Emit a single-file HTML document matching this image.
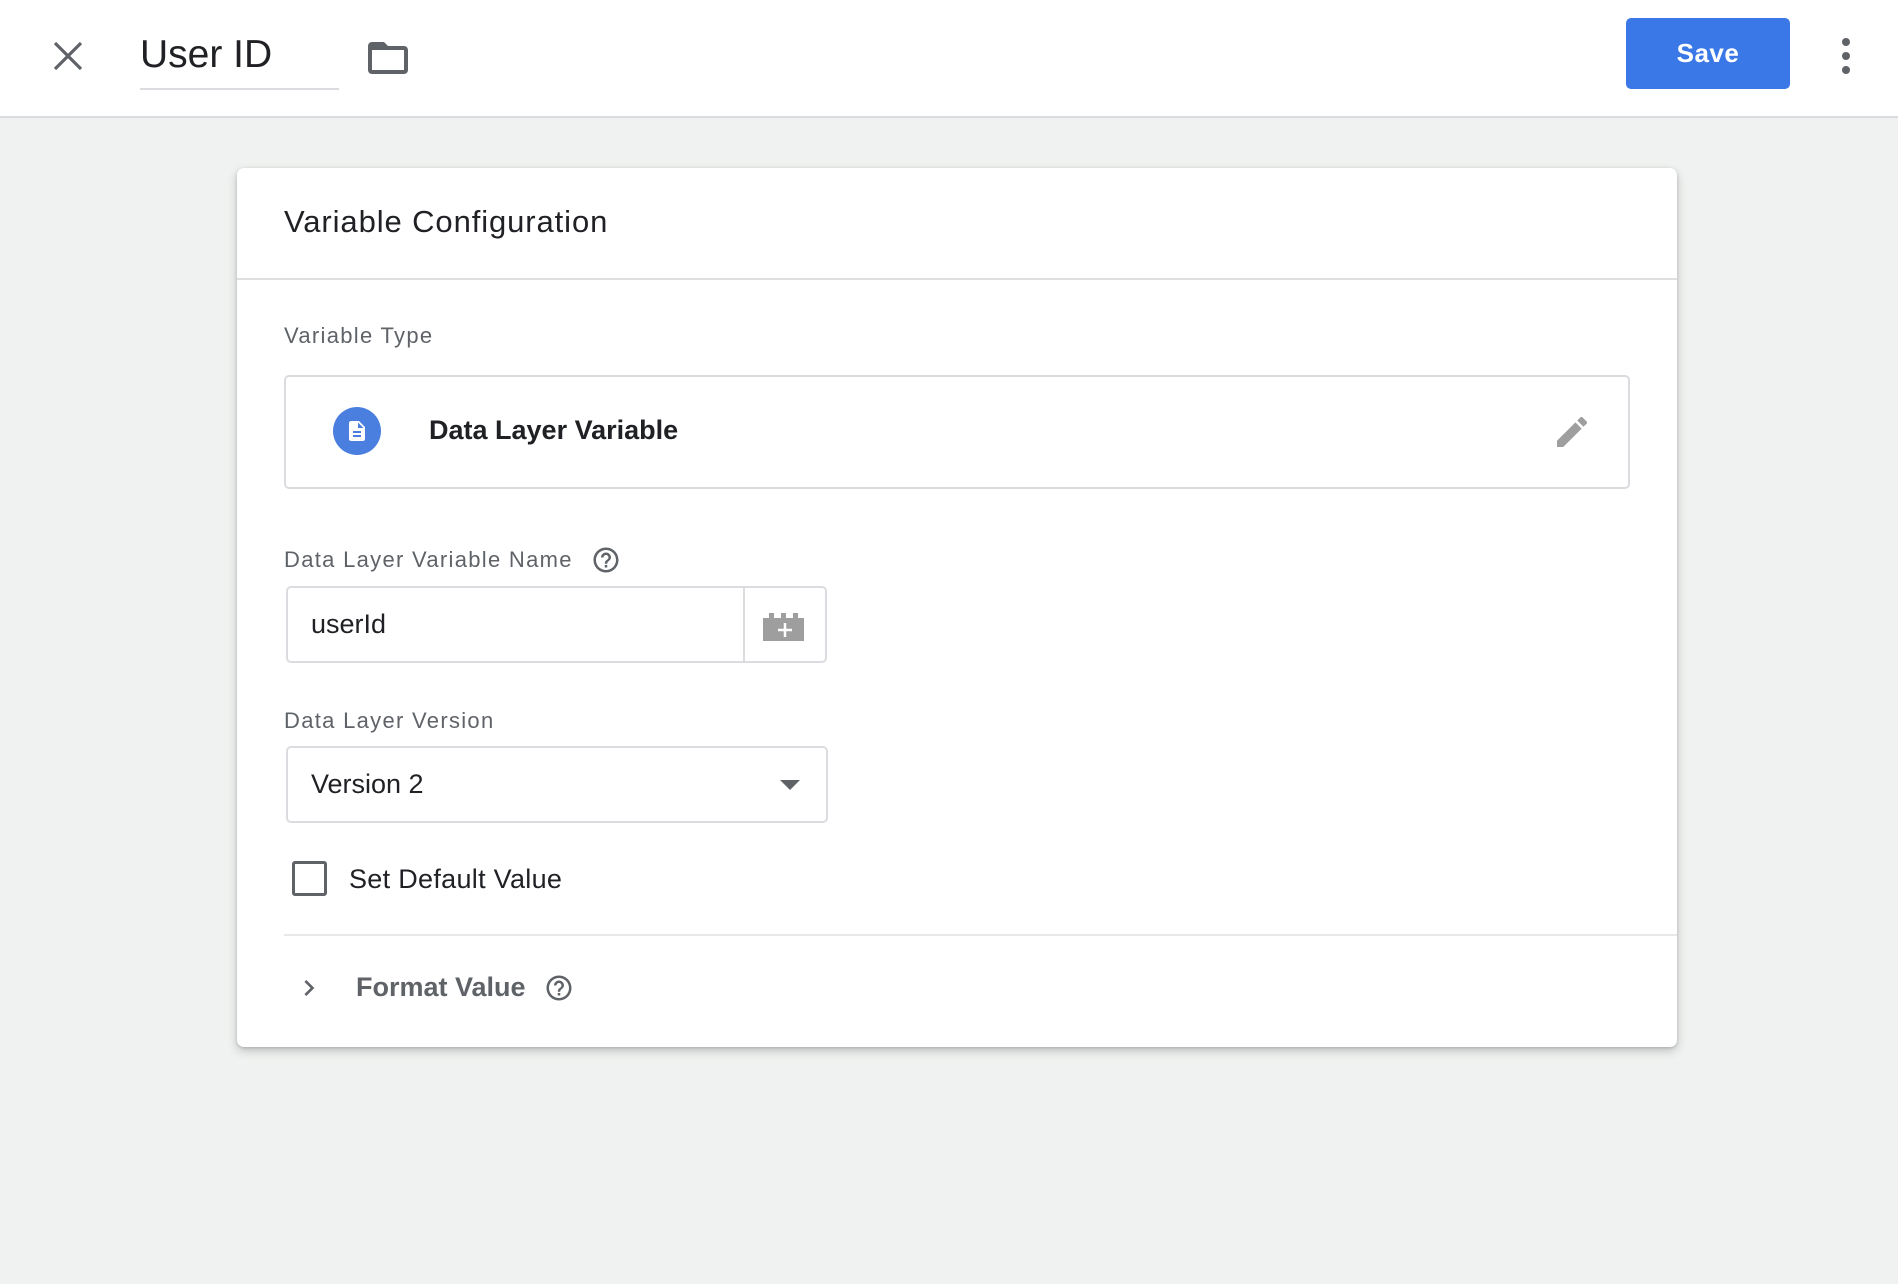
<!DOCTYPE html>
<html><head><meta charset="utf-8"><style>
*{box-sizing:border-box;margin:0;padding:0}
body{width:1898px;height:1284px;background:#f0f2f1;font-family:"Liberation Sans",sans-serif;position:relative;overflow:hidden;color:#202124}
.abs{position:absolute}
#hdr{left:0;top:0;width:1898px;height:118px;background:#fff;border-bottom:2px solid #dadce0}
#card{left:237px;top:168px;width:1440px;height:879px;background:#fff;border-radius:7px;box-shadow:0 4px 10px rgba(0,0,0,.2),0 1px 3px rgba(0,0,0,.15)}
.lbl{font-size:22px;color:#5f6368;letter-spacing:1.3px}
</style></head><body>
<div id="hdr" class="abs">
 <svg class="abs" style="left:52px;top:40px" width="32" height="32" viewBox="0 0 32 32"><path d="M3 3L29 29M29 3L3 29" stroke="#5f6368" stroke-width="3.2"/></svg>
 <div class="abs" style="left:140px;top:33px;font-size:39px;color:#202124">User ID</div>
 <div class="abs" style="left:140px;top:88px;width:199px;height:2px;background:#dadce0"></div>
 <svg class="abs" style="left:364px;top:34px" width="48" height="48" viewBox="0 0 24 24"><path d="M20 6h-8l-2-2H4c-1.1 0-1.99.9-1.99 2L2 18c0 1.1.9 2 2 2h16c1.1 0 2-.9 2-2V8c0-1.1-.9-2-2-2zm0 12H4V8h16v10z" fill="#5f6368"/></svg>
 <div class="abs" style="left:1626px;top:18px;width:164px;height:71px;background:#3b78e7;border-radius:5px;color:#fff;font-size:26px;font-weight:bold;display:flex;align-items:center;justify-content:center;letter-spacing:.5px">Save</div>
 <div class="abs" style="left:1842px;top:38px;width:8px;height:8px;border-radius:50%;background:#5f6368"></div>
 <div class="abs" style="left:1842px;top:52px;width:8px;height:8px;border-radius:50%;background:#5f6368"></div>
 <div class="abs" style="left:1842px;top:66px;width:8px;height:8px;border-radius:50%;background:#5f6368"></div>
</div>
<div id="card" class="abs">
 <div class="abs" style="left:47px;top:36px;font-size:31px;color:#202124;letter-spacing:.9px">Variable Configuration</div>
 <div class="abs" style="left:0;top:110px;width:1440px;height:2px;background:#e0e0e0"></div>
 <div class="abs lbl" style="left:47px;top:155px">Variable Type</div>
 <div class="abs" style="left:47px;top:207px;width:1346px;height:114px;border:2px solid #dadce0;border-radius:5px"></div>
 <div class="abs" style="left:96px;top:239px;width:48px;height:48px;border-radius:50%;background:#4a7fe0"></div>
 <svg class="abs" style="left:108px;top:251px" width="24" height="24" viewBox="0 0 24 24"><path d="M14 2H6c-1.1 0-2 .9-2 2v16c0 1.1.9 2 2 2h12c1.1 0 2-.9 2-2V8l-6-6zm2 16H8v-2h8v2zm0-4H8v-2h8v2zm-3-5V3.5L18.5 9H13z" fill="#fff"/></svg>
 <div class="abs" style="left:192px;top:247px;font-size:27px;font-weight:bold;color:#202124">Data Layer Variable</div>
 <svg class="abs" style="left:1315px;top:244px" width="40" height="40" viewBox="0 0 24 24"><path d="M3 17.25V21h3.75L17.81 9.94l-3.75-3.75L3 17.25zM20.71 7.04a1 1 0 000-1.41l-2.34-2.34a1 1 0 00-1.41 0l-1.83 1.83 3.75 3.75 1.83-1.83z" fill="#9e9e9e"/></svg>
 <div class="abs lbl" style="left:47px;top:379px">Data Layer Variable Name</div>
 <svg class="abs" style="left:354px;top:377px" width="30" height="30" viewBox="0 0 24 24"><path d="M11 18h2v-2h-2v2zm1-16C6.48 2 2 6.48 2 12s4.48 10 10 10 10-4.48 10-10S17.52 2 12 2zm0 18c-4.41 0-8-3.59-8-8s3.590-8 8-8 8 3.59 8 8-3.59 8-8 8zm0-14c-2.21 0-4 1.79-4 4h2c0-1.1.9-2 2-2s2 .9 2 2c0 2-3 1.75-3 5h2c0-2.25 3-2.5 3-5 0-2.21-1.79-4-4-4z" fill="#5f6368"/></svg>
 <div class="abs" style="left:49px;top:418px;width:541px;height:77px;border:2px solid #dadce0;border-radius:5px"></div>
 <div class="abs" style="left:506px;top:418px;width:2px;height:77px;background:#dadce0"></div>
 <div class="abs" style="left:74px;top:441px;font-size:27px;color:#202124">userId</div>
 <svg class="abs" style="left:524px;top:441px" width="48" height="32" viewBox="0 0 48 32"><path d="M2 9h6V4h5v5h7V4h5v5h7V4h5v5h6v23H2z" fill="#9e9e9e"/><path d="M24 14v14M17 21h14" stroke="#fff" stroke-width="2.5"/></svg>
 <div class="abs lbl" style="left:47px;top:540px">Data Layer Version</div>
 <div class="abs" style="left:49px;top:578px;width:542px;height:77px;border:2px solid #dadce0;border-radius:5px"></div>
 <div class="abs" style="left:74px;top:601px;font-size:27px;color:#202124">Version 2</div>
 <div class="abs" style="left:543px;top:612px;width:0;height:0;border-left:10px solid transparent;border-right:10px solid transparent;border-top:10px solid #5f6368"></div>
 <div class="abs" style="left:55px;top:693px;width:35px;height:35px;border:3px solid #5f6368;border-radius:3px"></div>
 <div class="abs" style="left:112px;top:696px;font-size:27px;color:#202124;letter-spacing:.3px">Set Default Value</div>
 <div class="abs" style="left:47px;top:766px;width:1393px;height:2px;background:#e8e8e8"></div>
 <svg class="abs" style="left:56px;top:804px" width="32" height="32" viewBox="0 0 24 24"><path d="M8.59 16.59L13.17 12 8.59 7.41 10 6l6 6-6 6z" fill="#5f6368"/></svg>
 <div class="abs" style="left:119px;top:804px;font-size:27px;font-weight:bold;color:#5f6368">Format Value</div>
 <svg class="abs" style="left:307px;top:805px" width="30" height="30" viewBox="0 0 24 24"><path d="M11 18h2v-2h-2v2zm1-16C6.48 2 2 6.48 2 12s4.48 10 10 10 10-4.48 10-10S17.520 2 12 2zm0 18c-4.41 0-8-3.59-8-8s3.59-8 8-8 8 3.59 8 8-3.59 8-8 8zm0-14c-2.21 0-4 1.79-4 4h2c0-1.1.9-2 2-2s2 .9 2 2c0 2-3 1.75-3 5h2c0-2.25 3-2.5 3-5 0-2.21-1.79-4-4-4z" fill="#5f6368"/></svg>
</div>
</body></html>
